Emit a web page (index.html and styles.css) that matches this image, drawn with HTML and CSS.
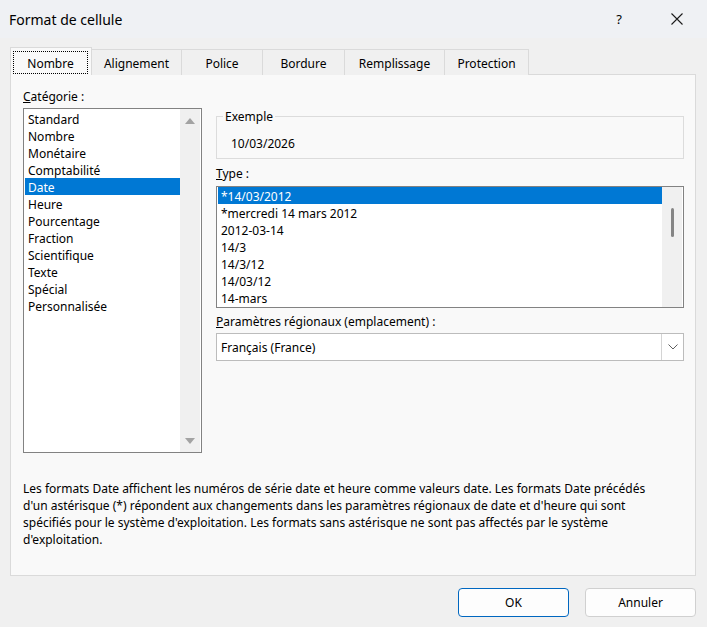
FILE: index.html
```html
<!DOCTYPE html>
<html lang="fr">
<head>
  <meta charset="UTF-8" />
  <title>Format de cellule</title>
  <link rel="stylesheet" href="styles.css">
</head>
<body>
  <div class="titlebar">
    <span class="title">Format de cellule</span>
    <span class="help">?</span>
    <span class="close">
      <svg width="12" height="12" viewBox="0 0 12 12"><path d="M0.5 0.5L11.5 11.5M11.5 0.5L0.5 11.5" stroke="#1b1b1b" stroke-width="1.1" fill="none"/></svg>
    </span>
  </div>

  <div class="dialog">
    <div class="tabs">
      <div class="tab active w-nombre"><span class="focus">Nombre</span></div>
      <div class="tab w-align">Alignement</div>
      <div class="tab w-police">Police</div>
      <div class="tab w-bordure">Bordure</div>
      <div class="tab w-rempl">Remplissage</div>
      <div class="tab w-protect">Protection</div>
    </div>

    <div class="panel">
      <div class="cols">
        <div class="left">
          <div class="label"><u>C</u>atégorie :</div>
          <div class="listbox cat">
            <div class="rows">
              <div class="row">Standard</div>
              <div class="row">Nombre</div>
              <div class="row">Monétaire</div>
              <div class="row">Comptabilité</div>
              <div class="row selected">Date</div>
              <div class="row">Heure</div>
              <div class="row">Pourcentage</div>
              <div class="row">Fraction</div>
              <div class="row">Scientifique</div>
              <div class="row">Texte</div>
              <div class="row">Spécial</div>
              <div class="row">Personnalisée</div>
            </div>
            <div class="vscroll">
              <span class="arrow up"></span>
              <span class="arrow down"></span>
            </div>
          </div>
        </div>

        <div class="right">
          <fieldset class="sample">
            <legend>Exemple</legend>
            <div class="sample-value">10/03/2026</div>
          </fieldset>

          <div class="label type-label"><u>T</u>ype :</div>
          <div class="listbox types">
            <div class="rows">
              <div class="row selected">*14/03/2012</div>
              <div class="row">*mercredi 14 mars 2012</div>
              <div class="row">2012-03-14</div>
              <div class="row">14/3</div>
              <div class="row">14/3/12</div>
              <div class="row">14/03/12</div>
              <div class="row">14-mars</div>
            </div>
            <div class="vscroll">
              <span class="thumb"></span>
            </div>
          </div>

          <div class="label locale-label"><u>P</u>aramètres régionaux (emplacement) :</div>
          <div class="combo">
            <span class="combo-text">Français (France)</span>
            <span class="drop">
              <svg width="10" height="6" viewBox="0 0 10 6"><path d="M0.5 0.5L5 5L9.5 0.5" stroke="#5f5f5f" stroke-width="1" fill="none"/></svg>
            </span>
          </div>
        </div>
      </div>

      <p class="desc">Les formats Date affichent les numéros de série date et heure comme valeurs date. Les formats Date précédés<br>d'un astérisque (*) répondent aux changements dans les paramètres régionaux de date et d'heure qui sont<br>spécifiés pour le système d'exploitation. Les formats sans astérisque ne sont pas affectés par le système<br>d'exploitation.</p>
    </div>

    <div class="buttons">
      <button class="btn primary">OK</button>
      <button class="btn">Annuler</button>
    </div>
  </div>
</body>
</html>
```

FILE: styles.css
```css
body {
  margin: 0;
  width: 707px;
  height: 627px;
  overflow: hidden;
  background-color: #f0f0f0;
  font-family: "Noto Sans", "Open Sans", sans-serif;
  font-size: 12px;
  color: #000;
}
.titlebar {
  height: 38px;
  display: flex;
  align-items: center;
  padding-left: 9px;
  background-color: #eff1f4;
}
.title {
  font-size: 14px;
}
.help {
  margin-left: auto;
  width: 46px;
  margin-right: 12px;
  text-align: center;
  font-size: 13px;
}
.close {
  width: 46px;
  margin-right: 7px;
  display: flex;
  justify-content: center;
}
.dialog {
  padding: 9px 11px 0 10px;
}
.tabs {
  display: flex;
  align-items: flex-end;
  height: 28px;
  margin-bottom: -1px;
}
.tab {
  box-sizing: border-box;
  height: 26px;
  line-height: 27px;
  text-align: center;
  border: 1px solid #dadada;
  border-bottom: none;
  margin-right: -1px;
  background-color: #f0f0f0;
}
.tab.active {
  position: relative;
  z-index: 1;
  height: 28px;
  background-color: #f9f9f9;
  padding: 3px 3px 0 2px;
}
.focus {
  display: block;
  height: 23px;
  line-height: 23px;
  box-sizing: border-box;
  border: 1px dotted #000;
}
.w-nombre { width: 82px; }
.w-align { width: 91px; }
.w-police { width: 82px; }
.w-bordure { width: 83px; }
.w-rempl { width: 101px; }
.w-protect { width: 85px; }
.panel {
  box-sizing: border-box;
  height: 502px;
  border: 1px solid #dadada;
  background-color: #f9f9f9;
  padding: 13px 11px 0 12px;
}
.cols {
  display: flex;
  gap: 14px;
}
.left {
  width: 179px;
}
.right {
  flex: 1;
}
.label {
  line-height: 17px;
}
.listbox {
  box-sizing: border-box;
  display: flex;
  background-color: #fff;
  border: 1px solid #828282;
  padding: 0 1px;
}
.cat {
  height: 345px;
  margin-top: 3px;
}
.cat .rows {
  width: 155px;
  margin-top: 1px;
}
.types {
  height: 122px;
  margin-top: 4px;
}
.types .rows {
  width: 444px;
}
.row {
  height: 17px;
  line-height: 19px;
  padding-left: 3px;
  white-space: nowrap;
}
.row.selected {
  background-color: #0078d4;
  color: #fff;
}
.vscroll {
  width: 20px;
  background-color: #f0f0f0;
  display: flex;
  flex-direction: column;
  align-items: center;
  justify-content: space-between;
  padding: 9px 0 8px;
  box-sizing: border-box;
}
.arrow {
  width: 0;
  height: 0;
  border-left: 5px solid transparent;
  border-right: 5px solid transparent;
}
.arrow.up {
  border-bottom: 6px solid #a3a3a3;
}
.arrow.down {
  border-top: 6px solid #a3a3a3;
}
.types .vscroll {
  padding: 21px 0 0;
  justify-content: flex-start;
}
.thumb {
  width: 3px;
  height: 29px;
  border-radius: 2px;
  background-color: #858585;
}
.sample {
  margin: 20px 0 0;
  padding: 0 6px 7px;
  border: 1px solid #dcdcdc;
}
.sample legend {
  padding: 0 2px;
  line-height: 17px;
}
.sample-value {
  margin: 9px 0 0 8px;
  line-height: 19px;
  height: 17px;
}
.type-label {
  margin-top: 6px;
}
.locale-label {
  margin-top: 5px;
}
.combo {
  box-sizing: border-box;
  height: 28px;
  margin-top: 3px;
  display: flex;
  align-items: stretch;
  background-color: #fff;
  border: 1px solid #bcbcbc;
}
.combo-text {
  flex: 1;
  padding: 0 0 0 4px;
  display: flex;
  align-items: center;
}
.drop {
  width: 21px;
  border-left: 1px solid #d4d4d4;
  display: flex;
  align-items: center;
  justify-content: center;
}
.desc {
  margin: 27px 0 0;
  line-height: 17px;
  white-space: nowrap;
}
.buttons {
  display: flex;
  justify-content: flex-end;
  gap: 16px;
  margin-top: 12px;
}
.btn {
  width: 111px;
  height: 29px;
  font-family: inherit;
  font-size: 12px;
  color: #000;
  background-color: #fdfdfd;
  border: 1px solid #d0d0d0;
  border-radius: 4px;
}
.btn.primary {
  border-color: #0067c0;
}
```
